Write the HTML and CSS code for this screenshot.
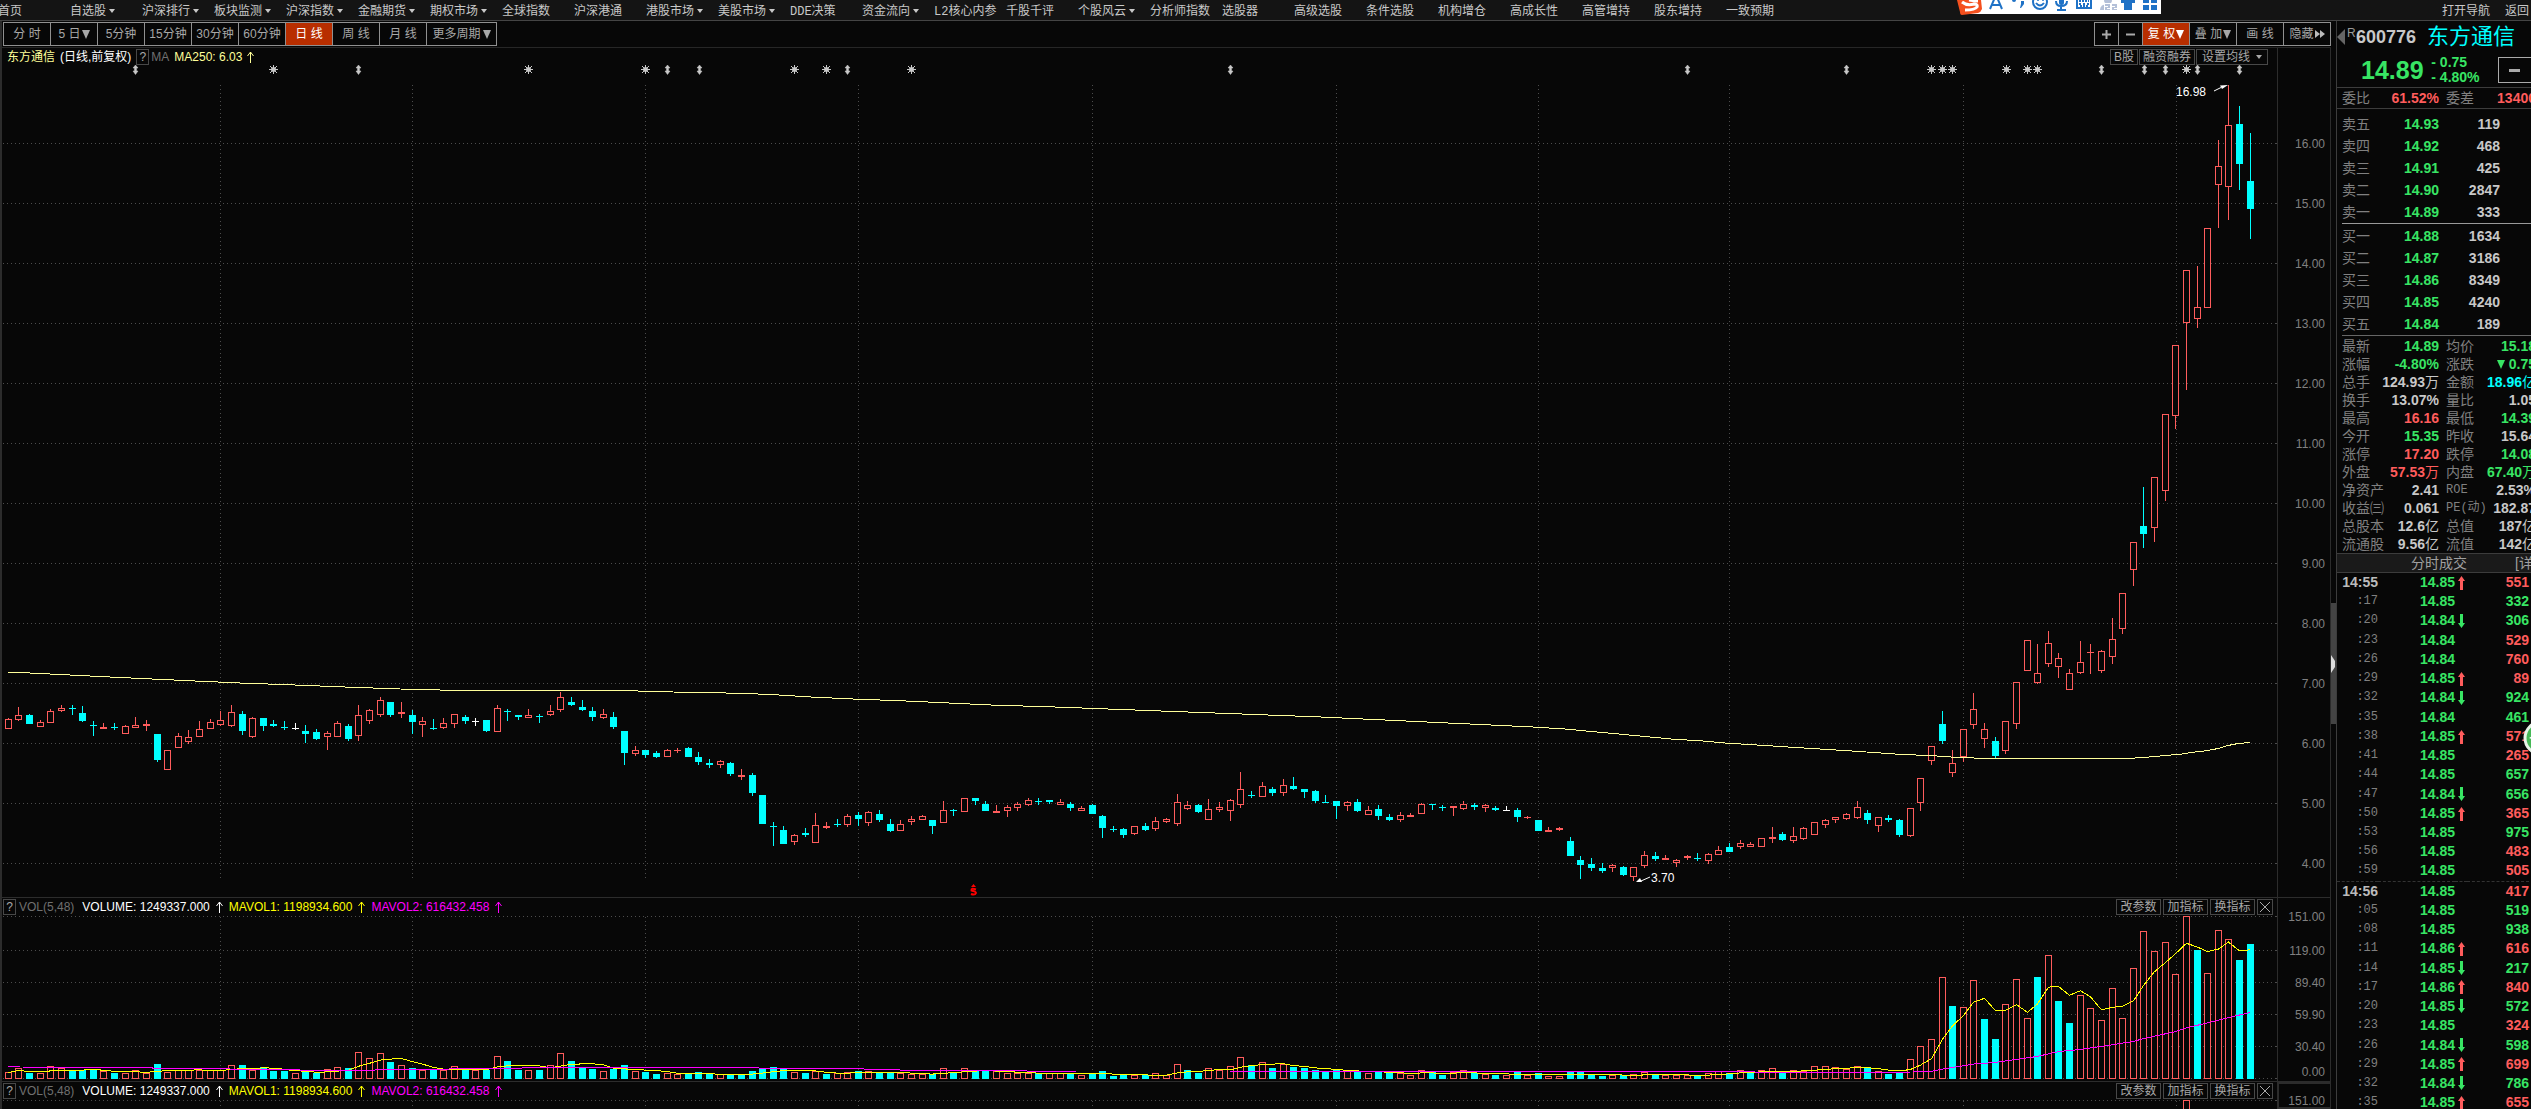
FILE: index.html
```html
<!DOCTYPE html>
<html lang="zh-CN">
<head>
<meta charset="utf-8">
<title>东方通信 600776 日线</title>
<link rel="stylesheet" href="styles.css">
</head>
<body>
<nav class="nav">
  <ul class="nav-list">
    <li><a href="#">首页</a></li>
    <li><a href="#" class="has-menu">自选股</a></li>
    <li><a href="#" class="has-menu">沪深排行</a></li>
    <li><a href="#" class="has-menu">板块监测</a></li>
    <li><a href="#" class="has-menu">沪深指数</a></li>
    <li><a href="#" class="has-menu">金融期货</a></li>
    <li><a href="#" class="has-menu">期权市场</a></li>
    <li><a href="#">全球指数</a></li>
    <li><a href="#">沪深港通</a></li>
    <li><a href="#" class="has-menu">港股市场</a></li>
    <li><a href="#" class="has-menu">美股市场</a></li>
    <li><a href="#"><span class="mono">DDE</span>决策</a></li>
    <li><a href="#" class="has-menu">资金流向</a></li>
    <li><a href="#"><span class="mono">L2</span>核心内参</a></li>
    <li><a href="#">千股千评</a></li>
    <li><a href="#" class="has-menu">个股风云</a></li>
    <li><a href="#">分析师指数</a></li>
    <li><a href="#">选股器</a></li>
    <li><a href="#">高级选股</a></li>
    <li><a href="#">条件选股</a></li>
    <li><a href="#">机构增仓</a></li>
    <li><a href="#">高成长性</a></li>
    <li><a href="#">高管增持</a></li>
    <li><a href="#">股东增持</a></li>
    <li><a href="#">一致预期</a></li>
  </ul>
  <div class="nav-end"><a href="#">打开导航</a><a href="#">返回</a></div>
  <svg class="ime" width="205" height="15" viewBox="0 0 205 15" aria-label="输入法工具栏">
    <rect x="5" y="0" width="199" height="14" fill="#fff"/>
    <path d="M0 0H24L25 9Q24 12 21 13L5 15Q3 15 3 12Z" fill="#f4501e"/>
    <path d="M5 2Q10 6 17 4Q21 4 20 7Q18 10 8 10M12 0Q18 1 21 1" fill="none" stroke="#fff" stroke-width="3"/>
    <g fill="none" stroke="#1f72c6" stroke-width="2">
      <path d="M33 9L39 -5L45 9M35 5H43"/>
      <circle cx="83" cy="2" r="7"/>
      <path d="M79 3Q83 8 87 3"/>
      <path d="M99 1Q99 6 104 6Q110 6 110 1M104 6V10M100 10H109"/>
      <rect x="120" y="-4" width="14" height="12"/>
      <path d="M122 1H132M122 4H124M126 4H128M130 4H132M123 6H131" stroke-dasharray="2 1"/>
    </g>
    <g fill="#1f72c6">
      <circle cx="57" cy="0" r="2"/>
      <path d="M64 1H67V4L64 8H63L64 4Z"/>
      <circle cx="81" cy="0" r="1"/><circle cx="86" cy="0" r="1"/>
      <rect x="102" y="-4" width="5" height="9" rx="2"/>
      <path d="M164 0H178V3H175V10H167V3H164Z"/>
      <path d="M186 0H192V3H186ZM194 0H200V3H194ZM186 5H192V10H186ZM194 5H200V10H194Z"/>
    </g>
    <g fill="#b4c0d8">
      <circle cx="151" cy="0" r="4"/><path d="M143 10Q143 4 151 4Q158 4 158 10Z"/>
      <rect x="147" y="3" width="13" height="8" fill="#fff"/>
      <path d="M148 4H153V8H150V9H153V10H148V7H151V6H148ZM155 4H160V8H157V9H160V10H155V7H158V6H155Z"/>
    </g>
  </svg>
</nav>

<main class="work">
  <section class="charts">
    <div class="toolbar">
      <div class="group">
        <button>分 时</button><button>5 日<i class="tri"></i></button><button>5分钟</button><button>15分钟</button><button>30分钟</button><button>60分钟</button><button class="on">日 线</button><button>周 线</button><button>月 线</button><button class="wide">更多周期<i class="tri"></i></button>
      </div>
      <div class="group">
        <button class="sq" aria-label="放大"><svg width="9" height="9"><path d="M0 4.5H9M4.5 0V9" stroke="#aaa" stroke-width="2"/></svg></button><button class="sq" aria-label="缩小"><svg width="9" height="9"><path d="M0 4.5H9" stroke="#aaa" stroke-width="2"/></svg></button><button class="on">复 权<i class="tri"></i></button><button>叠 加<i class="tri"></i></button><button>画 线</button><button>隐藏<svg width="10" height="8"><path d="M0 0L5 4L0 8ZM5 0L10 4L5 8Z" fill="#bbb"/></svg></button>
      </div>
    </div>

    <div class="panel">
      <div class="plot">
        <div class="head">
          <span class="name">东方通信</span><span class="white">(日线,前复权)</span><button class="tag help">?</button><span class="dim">MA</span><span class="name">MA250: 6.03</span><svg class="up" viewBox="0 0 7 12"><path d="M3.5 12V1M0.5 5L3.5 1L6.5 5"/></svg>
          <div class="tags"><button class="tag">B股</button><button class="tag">融资融券</button><button class="tag menu">设置均线<i class="caret"></i></button></div>
        </div>
        <svg id="price" class="price" viewBox="2 65 2275 832" preserveAspectRatio="none"></svg>
      </div>
      <ol class="axis price-axis">
        <li>16.00</li><li>15.00</li><li>14.00</li><li>13.00</li><li>12.00</li><li>11.00</li><li>10.00</li><li>9.00</li><li>8.00</li><li>7.00</li><li>6.00</li><li>5.00</li><li>4.00</li>
      </ol>
    </div>

    <div class="panel">
      <div class="plot">
        <div class="head vol-head">
          <button class="tag help">?</button><span class="dim">VOL(5,48)</span><span class="white">VOLUME: 1249337.000</span><svg class="up white" viewBox="0 0 7 12"><path d="M3.5 12V1M0.5 5L3.5 1L6.5 5"/></svg><span class="yellow">MAVOL1: 1198934.600</span><svg class="up yellow" viewBox="0 0 7 12"><path d="M3.5 12V1M0.5 5L3.5 1L6.5 5"/></svg><span class="pink">MAVOL2: 616432.458</span><svg class="up pink" viewBox="0 0 7 12"><path d="M3.5 12V1M0.5 5L3.5 1L6.5 5"/></svg>
          <div class="tags vol-tags"><button class="tag">改参数</button><button class="tag">加指标</button><button class="tag">换指标</button><button class="tag close" aria-label="关闭"><svg width="10" height="10"><path d="M0 0L10 10M10 0L0 10" stroke="#aaa"/></svg></button></div>
        </div>
        <svg class="volume" viewBox="2 915 2275 164" preserveAspectRatio="none"></svg>
      </div>
      <ol class="axis vol-axis"><li>151.00</li><li>119.00</li><li>89.40</li><li>59.90</li><li>30.40</li><li>0.00</li></ol>
    </div>

    <div class="panel rest">
      <div class="plot">
        <div class="head vol-head">
          <button class="tag help">?</button><span class="dim">VOL(5,48)</span><span class="white">VOLUME: 1249337.000</span><svg class="up white" viewBox="0 0 7 12"><path d="M3.5 12V1M0.5 5L3.5 1L6.5 5"/></svg><span class="yellow">MAVOL1: 1198934.600</span><svg class="up yellow" viewBox="0 0 7 12"><path d="M3.5 12V1M0.5 5L3.5 1L6.5 5"/></svg><span class="pink">MAVOL2: 616432.458</span><svg class="up pink" viewBox="0 0 7 12"><path d="M3.5 12V1M0.5 5L3.5 1L6.5 5"/></svg>
          <div class="tags vol-tags"><button class="tag">改参数</button><button class="tag">加指标</button><button class="tag">换指标</button><button class="tag close" aria-label="关闭"><svg width="10" height="10"><path d="M0 0L10 10M10 0L0 10" stroke="#aaa"/></svg></button></div>
        </div>
        <svg class="volume" viewBox="2 915 2275 164" preserveAspectRatio="none"></svg>
      </div>
      <ol class="axis vol-axis boxed"><li>151.00</li></ol>
    </div>
  </section>

  <div class="splitter"><button class="handle" aria-label="收起"><svg width="5" height="18"><path d="M0 0L4 6V12L0 18Z" fill="#ddd"/></svg></button></div>

  <aside class="side">
    <div class="side-in">
      <header class="quote">
        <div class="title">
          <svg width="8" height="16"><path d="M8 0V16L0 8Z" fill="#666"/></svg><sup>R</sup><span class="code">600776</span><span class="stock">东方通信</span><svg width="8" height="16"><path d="M0 0V16L8 8Z" fill="#888"/></svg>
        </div>
        <div class="last">
          <span class="big">14.89</span>
          <span class="chg"><span>- 0.75</span><span>- 4.80%</span></span>
          <button class="minus" aria-label="减"><svg width="11" height="3"><rect width="11" height="3" fill="#aaa"/></svg></button>
        </div>
      </header>
      <table class="stats ratio">
        <tr><th>委比</th><td class="r">61.52%</td><th>委差</th><td class="r">13400</td></tr>
      </table>
      <table class="book asks">
        <tr><th>卖五</th><td class="g">14.93</td><td>119</td><td></td></tr>
        <tr><th>卖四</th><td class="g">14.92</td><td>468</td><td></td></tr>
        <tr><th>卖三</th><td class="g">14.91</td><td>425</td><td></td></tr>
        <tr><th>卖二</th><td class="g">14.90</td><td>2847</td><td></td></tr>
        <tr><th>卖一</th><td class="g">14.89</td><td>333</td><td></td></tr>
      </table>
      <table class="book bids">
        <tr><th>买一</th><td class="g">14.88</td><td>1634</td><td></td></tr>
        <tr><th>买二</th><td class="g">14.87</td><td>3186</td><td></td></tr>
        <tr><th>买三</th><td class="g">14.86</td><td>8349</td><td></td></tr>
        <tr><th>买四</th><td class="g">14.85</td><td>4240</td><td></td></tr>
        <tr><th>买五</th><td class="g">14.84</td><td>189</td><td></td></tr>
      </table>
      <table class="stats">
        <tr><th>最新</th><td class="g">14.89</td><th>均价</th><td class="g">15.18</td></tr>
        <tr><th>涨幅</th><td class="g">-4.80%</td><th>涨跌</th><td class="g"><i class="tri"></i> 0.75</td></tr>
        <tr><th>总手</th><td>124.93<b>万</b></td><th>金额</th><td class="c">18.96<b>亿</b></td></tr>
        <tr><th>换手</th><td>13.07%</td><th>量比</th><td>1.05</td></tr>
        <tr><th>最高</th><td class="r">16.16</td><th>最低</th><td class="g">14.39</td></tr>
        <tr><th>今开</th><td class="g">15.35</td><th>昨收</th><td>15.64</td></tr>
        <tr><th>涨停</th><td class="r">17.20</td><th>跌停</th><td class="g">14.08</td></tr>
        <tr><th>外盘</th><td class="r">57.53<b>万</b></td><th>内盘</th><td class="g">67.40<b>万</b></td></tr>
        <tr><th>净资产</th><td>2.41</td><th class="mono">ROE</th><td>2.53%</td></tr>
        <tr><th>收益㈢</th><td>0.061</td><th class="mono">PE(动)</th><td>182.87</td></tr>
        <tr><th>总股本</th><td>12.6<b>亿</b></td><th>总值</th><td>187<b>亿</b></td></tr>
        <tr><th>流通股</th><td>9.56<b>亿</b></td><th>流值</th><td>142<b>亿</b></td></tr>
      </table>
      <h2 class="ticks-title"><span>分时成交</span><a href="#">[详细]</a></h2>
      <table class="ticks"><tbody id="ticks"></tbody></table>
    </div>
    <button class="float" aria-label="助手"><svg width="36" height="36" viewBox="0 0 36 36"><circle cx="18" cy="18" r="16" fill="#45b856" stroke="#e8f4e8" stroke-width="3"/><path d="M6 18L12 14V17H24V20H12Z" fill="#fff"/></svg></button>
  </aside>
</main>
<script src="chart.js"></script>
</body>
</html>
```

FILE: styles.css
```css
* { box-sizing: border-box; }

:root {
  --bg: #070707;
  --line: #3c3c3c;
  --text: #c8c8c8;
  --dim: #808080;
  --red: #ff5c5c;
  --green: #38e564;
  --cyan: #00ffff;
}

body {
  margin: 0;
  height: 100vh;
  overflow: hidden;
  display: flex;
  flex-direction: column;
  background: var(--bg);
  color: var(--text);
  font: 12px/16px "Liberation Sans", "Noto Sans CJK SC", sans-serif;
}

ul, ol { list-style: none; margin: 0; padding: 0; }
a { color: inherit; text-decoration: none; }
button { font: inherit; color: inherit; background: none; border: 0; padding: 0; margin: 0; white-space: nowrap; }
.mono { font-family: "Liberation Mono", "Noto Sans CJK SC", monospace; }

/* top menu */
.nav {
  position: relative;
  flex: none;
  display: flex;
  justify-content: space-between;
  height: 21px;
  background: #141414;
  border-bottom: 1px solid #444;
  line-height: 22px;
  white-space: nowrap;
}
.nav-list { display: flex; margin-left: -2px; }
.nav-list li { width: 72px; }
.has-menu::after {
  content: "";
  display: inline-block;
  margin-left: 3px;
  vertical-align: 2px;
  border: 3px solid transparent;
  border-top: 4px solid var(--text);
  border-bottom: 0;
}
.nav-end { display: flex; gap: 15px; padding-right: 2px; }
.ime { position: absolute; top: 0; right: 369px; }

.work { flex: 1; display: flex; min-height: 0; overflow: hidden; }
.charts {
  flex: 1;
  min-width: 0;
  display: flex;
  flex-direction: column;
  overflow: hidden;
  border-left: 2px solid #2c2c2c;
}

/* period buttons */
.toolbar {
  flex: none;
  display: flex;
  justify-content: space-between;
  height: 27px;
  padding: 1px 0 1px 1px;
  border-bottom: 1px solid #262626;
}
.group { display: flex; height: 24px; border-left: 1px solid #909090; }
.group button {
  display: flex;
  align-items: center;
  justify-content: center;
  gap: 1px;
  width: 47px;
  border: 1px solid #909090;
  border-left: 0;
  color: #a8a8a8;
}
.group .wide { width: 70px; gap: 2px; }
.group .sq { width: 24px; }
.group .on { background: #b82e00; color: #fff; }
.tri {
  display: inline-block;
  border: 4px solid transparent;
  border-top: 9px solid currentColor;
  border-bottom: 0;
}
.caret { border: 3px solid transparent; border-top: 4px solid currentColor; border-bottom: 0; }

/* chart panels */
.panel { flex: none; display: flex; border-bottom: 1px solid #2c2c2c; }
.rest { flex: 1 1 0; min-height: 0; overflow: hidden; border-bottom: 0; }
.plot { flex: 1; min-width: 0; }
.plot > svg { display: block; width: 100%; }
.price { height: 832px; }
.volume { height: 164px; }
.head {
  display: flex;
  align-items: center;
  gap: 5px;
  height: 17px;
  padding: 0 9px 0 5px;
  white-space: nowrap;
}
.vol-head { gap: 6px; padding: 0 4px 0 1px; }
.name { color: #ffff99; }
.white { color: #fff; }
.yellow { color: #ffff00; }
.pink { color: #ff00ff; }
.dim { color: #707070; }
.help + .dim { margin-left: -3px; }
.vol-head .dim { margin-right: 2px; }
.up { width: 7px; height: 12px; fill: none; stroke: currentColor; }
.head > .name + .up { color: #ffff99; }
.tags { display: flex; gap: 1px; margin-left: auto; }
.vol-tags { gap: 2px; }
.tag {
  display: flex;
  align-items: center;
  justify-content: center;
  height: 16px;
  padding: 0 3px;
  border: 1px solid #484848;
  color: #a8a8a8;
}
.menu { gap: 6px; padding: 0 5px; }
.vol-tags .tag { width: 45px; }
.vol-tags .close { width: 16px; padding: 0; }
.help.tag { width: 13px; padding: 0; }

.axis {
  width: 54px;
  padding-right: 5px;
  border: 1px solid #2c2c2c;
  border-width: 0 1px;
  color: var(--dim);
  text-align: right;
}
.price-axis { padding-top: 66px; }
.price-axis li { line-height: 60px; }
.vol-axis { padding-top: 3px; }
.vol-axis li { line-height: 32px; }
.vol-axis li:first-child { margin-bottom: 2px; }
.vol-axis li:last-child { line-height: 18px; }
.boxed { border-width: 2px 1px 2px 2px; padding-top: 8px; }
.vol-axis.boxed li { margin: 0; }

.grid { stroke: #4c4c4c; stroke-dasharray: 1 3; fill: none; }
.note { fill: #fff; font-size: 12px; }

/* divider between charts and quote column */
.splitter { width: 5px; padding-top: 582px; }
.handle { display: flex; align-items: center; width: 5px; height: 121px; background: #444; }

/* quote column */
.side { position: relative; width: 195px; overflow: hidden; border-left: 1px solid var(--line); }
.side-in { width: 202px; }
.quote { height: 67px; border-bottom: 1px solid var(--line); }
.title { display: flex; align-items: center; height: 32px; white-space: nowrap; }
.title sup { width: 11px; padding-left: 2px; font-size: 12px; line-height: 24px; align-self: flex-start; color: #999; }
.code { font: bold 18px/32px "Liberation Sans", sans-serif; }
.stock { flex: 1; padding-left: 11px; font-size: 22px; line-height: 32px; color: var(--cyan); }
.title svg { flex: none; }
.last { display: flex; align-items: center; height: 34px; padding-left: 24px; color: var(--green); font-weight: bold; }
.big { width: 72px; font-size: 25px; line-height: 32px; }
.chg { display: grid; width: 68px; font-size: 14px; line-height: 15px; }
.minus { width: 42px; height: 26px; border: 1px solid #aaa; display: flex; align-items: center; padding-left: 10px; }

table { border-collapse: collapse; table-layout: fixed; width: 100%; font-size: 14px; }
th { padding: 0; font-weight: normal; text-align: left; color: var(--dim); white-space: nowrap; }
td { padding: 0; font-weight: bold; text-align: right; white-space: nowrap; }
td b { font-weight: normal; }
.r { color: var(--red); }
.g { color: var(--green); }
.c { color: var(--cyan); }

.stats { width: 194px; margin-left: 5px; line-height: 18px; }
.stats th:first-child { width: 36px; }
.stats th:nth-child(3) { width: 46px; padding-left: 7px; }
.stats td:nth-child(2) { width: 61px; }
.stats .mono { font-size: 12px; }
.ratio { width: 199px; margin-left: 0; line-height: 20px; border-bottom: 1px solid var(--line); }
.ratio th:first-child { width: 41px; padding-left: 5px; }
.book { width: 196px; margin-left: 5px; line-height: 22px; }
.book th { width: 36px; }
.book td:nth-child(2) { width: 61px; }
.book td:nth-child(3) { width: 61px; }
.asks { margin-top: 4px; border-bottom: 1px solid #999; }
.bids { margin-top: 1px; border-bottom: 1px solid #666; margin-bottom: 1px; }

.ticks-title {
  display: flex;
  justify-content: space-between;
  margin: 0;
  padding: 0 0 0 74px;
  border: 1px solid var(--line);
  border-width: 1px 0;
  background: #1a1a1a;
  font-size: 14px;
  font-weight: normal;
  line-height: 18px;
  color: #a0a0a0;
  white-space: nowrap;
}
.ticks-title a { width: 24px; }
.ticks { width: 192px; }
.ticks tr { height: 19px; line-height: 19px; }
.ticks tr:nth-child(4n) { height: 20px; }
.ticks td:nth-child(1) { width: 41px; color: #bbb; }
.ticks td:nth-child(1).mono { font-size: 12px; font-weight: normal; color: var(--dim); }
.ticks td:nth-child(2) { width: 77px; }
.ticks td:nth-child(3) { width: 12px; }
.ticks td svg { display: block; margin-left: 3px; }
.ticks .minute { border-top: 1px dashed #333; }

.float { position: absolute; top: 699px; right: -28px; width: 36px; height: 36px; }
```

FILE: chart.js
```js
// One entry per trading day: colour, high, body top, body bottom, low, volume top
const days = `r718 719 729 729 1072|r707 715 720 721 1068|c714 715 724 724 1073|r720 722 727 727 1073|r709 711 723 723 1066|r705 708 711 712 1068|c705 708 709 715 1071|c706 713 721 722 1070|c721 725 726 736 1069|r723 727 729 729 1071
c723 727 728 730 1073|r725 726 734 734 1073|r717 725 728 728 1070|r720 724 726 731 1073|c734 734 760 762 1064|r750 750 770 770 1072|r733 736 748 748 1070|r730 737 742 744 1070|r721 729 737 737 1070|r719 722 729 729 1070
r711 720 725 726 1070|r705 712 726 727 1065|c711 714 731 735 1065|r717 718 737 738 1070|c718 718 726 731 1067|c720 724 726 727 1071|c721 727 728 730 1071|w723 728 729 730 1073|c725 731 734 743 1071|c729 732 739 740 1073
r731 733 737 750 1069|r721 723 737 737 1067|c724 726 739 741 1068|r705 715 736 741 1052|r709 710 721 724 1058|r697 700 715 717 1053|c702 702 715 717 1062|r702 712 714 718 1065|c710 715 722 734 1068|r717 721 725 737 1070
c719 728 729 730 1070|r718 723 728 729 1070|r714 714 724 728 1066|c715 717 721 724 1070|w718 721 722 726 1070|c720 720 731 732 1070|r705 708 732 732 1056|c709 711 712 721 1061|c715 715 717 720 1070|r709 715 718 718 1070
c714 716 717 723 1070|r705 711 715 716 1065|r692 697 710 712 1053|c697 702 705 706 1061|c700 707 710 711 1068|c707 711 717 721 1069|r709 714 718 719 1071|c712 717 727 729 1069|c731 731 753 765 1065|r746 750 754 756 1071
c750 750 755 758 1072|c751 753 757 758 1074|r749 750 757 757 1073|r748 750 751 753 1074|c747 748 757 757 1074|c752 757 762 765 1072|c759 763 765 768 1074|r760 761 765 768 1074|c762 763 774 776 1074|r769 775 777 780 1075
c773 775 793 796 1071|c795 795 824 824 1069|c822 826 827 846 1067|c826 830 844 844 1069|r834 835 842 845 1072|c828 833 835 837 1073|r813 825 843 843 1071|r822 826 828 829 1074|c819 824 825 827 1073|r814 816 825 827 1072
c812 815 819 826 1071|r811 812 823 826 1071|c810 814 820 822 1072|c819 824 831 832 1073|r820 824 831 831 1073|r816 819 822 825 1074|r815 816 820 820 1074|c820 820 826 834 1074|r801 810 823 823 1068|c809 810 811 816 1072
r798 798 812 812 1068|c798 798 801 805 1071|c801 804 811 811 1071|r805 811 813 813 1071|r805 807 811 817 1073|r802 804 808 811 1073|r798 800 805 806 1073|c798 801 802 805 1073|c800 800 802 804 1073|r799 802 805 805 1073
c802 804 808 811 1073|r806 808 811 811 1075|c804 805 814 814 1073|c815 816 828 838 1071|c826 829 830 832 1076|c828 829 835 838 1075|r826 826 834 835 1075|c823 826 830 831 1075|r817 821 829 831 1073|r818 819 822 823 1075
r794 802 824 826 1064|r801 805 809 810 1070|c804 805 812 813 1073|r799 809 820 820 1068|r802 807 810 812 1070|r799 800 811 821 1066|r772 789 805 808 1057|c791 795 796 798 1065|r782 786 797 797 1062|c787 789 793 796 1068
r779 785 793 796 1064|c777 786 789 790 1067|c789 789 792 798 1068|c790 791 801 803 1070|c795 802 803 803 1071|c801 801 806 819 1069|r801 802 806 811 1071|c799 802 811 812 1071|r806 810 815 815 1073|c805 809 816 820 1072
c814 817 820 821 1072|r812 815 820 822 1073|r813 815 817 817 1075|r803 804 814 814 1070|c804 804 805 810 1072|c805 807 808 811 1075|r806 806 808 816 1072|r801 804 809 810 1070|c803 805 807 810 1073|r804 805 808 812 1074
c806 808 810 811 1075|w806 810 811 811 1075|c808 810 817 822 1072|r816 817 818 819 1075|c820 820 831 831 1073|r827 830 832 832 1076|r827 828 830 831 1076|c837 841 856 856 1072|c856 860 865 879 1072|c858 864 868 871 1075
c863 868 871 873 1076|r864 865 868 872 1075|c866 867 875 876 1075|r867 867 877 881 1074|r851 855 866 868 1072|c852 856 859 861 1075|r855 858 860 860 1075|r859 860 863 867 1075|r855 856 858 860 1075|c853 858 859 861 1075
r853 854 861 864 1073|r846 850 855 855 1071|c843 847 852 852 1073|r840 843 847 849 1070|r842 844 847 847 1073|r838 838 847 847 1070|r827 837 839 843 1068|c832 834 840 841 1073|r827 836 841 843 1070|r827 828 839 840 1071
r822 822 835 835 1066|r819 820 825 828 1066|r817 817 820 823 1067|r813 814 819 820 1069|r801 807 818 819 1066|c810 813 820 824 1068|r817 817 826 832 1071|c815 818 820 822 1074|c819 820 835 837 1073|r808 808 836 837 1059
r778 778 803 811 1046|r746 746 761 765 1039|c711 724 741 744 977|r750 763 773 777 1006|r729 729 757 762 1007|r693 709 725 729 980|r723 729 739 748 1019|c737 741 756 758 1039|r721 721 751 754 1004|r682 682 724 729 979
r640 640 671 671 1018|r644 673 683 684 977|r631 643 664 667 955|r653 658 667 678 1001|r669 673 690 690 1023|r641 662 673 674 995|r644 652 653 674 1008|r650 651 671 673 1020|r618 639 657 664 988|r593 593 629 634 1018
r542 542 570 586 968|c487 526 534 548 931|r477 477 528 542 951|r414 414 491 501 942|r345 345 416 429 974|r270 270 323 390 916|r266 307 319 328 950|r228 228 308 308 973|r140 166 185 228 930|r85 125 187 220 939
c106 124 164 190 960|c133 181 209 239 944`
  .split(/[|\n]/)
  .map(s => [s[0], ...s.slice(1).split(' ').map(Number)]);

// Days whose volume bar takes the opposite colour of the candle body
const flipped = new Set([69, 77, 78, 98, 111, 164, 182, 183, 186, 191, 193, 194, 201, 206]);
const colours = { r: '#ff5c5c', c: '#00ffff', w: '#ffffff' };
const gridX = [220, 412, 645, 858, 1092, 1336, 1538, 1729, 1963, 2176];
const x = i => Math.floor(8.3 + 10.625 * i);

const rect = (l, t, w, h, fill) => `<rect x="${l}" y="${t}" width="${w}" height="${h}" fill="${fill}"/>`;
const box = (c, t, b, colour) =>
  `<rect x="${c - 2.5}" y="${t + .5}" width="6" height="${b - t - 1}" fill="#070707" stroke="${colour}"/>`;
const line = (pts, colour) =>
  `<polyline points="${pts}" fill="none" stroke="${colour}" shape-rendering="crispEdges"/>`;
const hGrid = y => `<path class="grid" d="M3 ${y + .5}H2274"/><path d="M2275 ${y + .5}H2277" stroke="#4c4c4c"/>`;

function priceChart() {
  let out = '';
  for (let y = 143; y < 880; y += 60) out += hGrid(y);
  for (const g of gridX) out += `<path class="grid" d="M${g + .5} 85V879"/>`;
  days.forEach(([k, h, t, b, l], i) => {
    const c = x(i), f = colours[k];
    if (t > h) out += rect(c, h, 1, t - h, f);
    if (l > b) out += rect(c, b, 1, l - b, f);
    out += k === 'r' && b - t > 2 ? box(c, t, b, f) : rect(c - 3, t, 7, b - t, f);
  });
  out += line(`8,672 30,673 70,675 110,677 152,679 195,681 240,683 295,685 345,687 400,689 440,690 620,690.5
    673,692 726,693 758,694 779,695 811,697 853,699 906,701 949,703 991,705 1055,707 1108,709 1161,711 1215,713
    1268,715 1321,717 1363,719 1406,721 1448,723 1491,725 1533,727 1565,729 1586,731 1608,733 1629,735 1650,737
    1671,739 1703,741 1725,743 1757,745 1788,747 1820,749 1852,751 1895,754 1937,756 1958,757.5 1990,758.5
    2128,758.5 2149,757 2171,755 2182,754 2195,752 2208,750.5 2218,748.5 2228,745.5 2238,743.5 2250,742.5`, '#ffff99');

  const arrows = [135, 358, 667, 699, 847, 1230, 1687, 1846, 2101, 2144, 2165, 2197, 2239];
  const stars = [273, 528, 645, 794, 826, 911, 1931, 1942, 1952, 2006, 2027, 2037, 2186];
  for (const a of arrows)
    out += `<path transform="translate(${a} 65)" d="M.5 0L3 3H1.500V6H3L.5 9.500L-2 6H-.500V3H-2Z" fill="#c8c8c8" stroke="#c8c8c8" stroke-width=".5"/>`;
  for (const s of stars)
    out += `<path transform="translate(${s + .5} 69.5)" d="M0-4.500V4.500M-4.500 0H4.500M-3.500-3.500L3.500 3.500M-3.500 3.500L3.500-3.500" stroke="#c8c8c8"/><circle cx="${s + .5}" cy="69.5" r="2.500" fill="#c8c8c8"/>`;

  out += `<text class="note" x="2176" y="96">16.98</text>
    <path d="M2214 91L2221 87.500" stroke="#fff"/><path d="M2228 85L2220 85.500L2222 89Z" fill="#fff"/>
    <text class="note" x="1651" y="882">3.70</text>
    <path d="M1650 877L1641 881" stroke="#fff"/><path d="M1636 882L1642 882L1640 878Z" fill="#fff"/>
    <path d="M971 887L973.500 884L976 887Z" fill="#f00"/>
    <path d="M976 889.500Q971 887.500 971.500 890.500Q976 891.500 976 893Q975 895.500 971 894" fill="none" stroke="#f00" stroke-width="2"/>`;
  return out;
}

function volumeChart() {
  let out = '';
  for (const y of [916, 950, 982, 1014, 1046, 1078]) out += hGrid(y);
  for (const g of gridX) out += `<path class="grid" d="M${g + .5} 917V1078"/>`;
  days.forEach((d, i) => {
    const red = (d[0] !== 'c') !== flipped.has(i), c = x(i), top = d[5];
    out += red ? box(c, top, 1079, colours.r) : rect(c - 3, top, 7, 1079 - top, colours.c);
  });
  const ma5 = days.map((d, i) => {
    const span = days.slice(Math.max(0, i - 4), i + 1);
    return `${x(i) + .5},${(span.reduce((s, v) => s + v[5], 0) / span.length + .5).toFixed(1)}`;
  }).join(' ');
  out += line(ma5, '#ffff00');
  out += line(`8,1066 20,1067 110,1067.500 195,1068.500 300,1070 375,1070 560,1067.500 705,1067.500 864,1069
    900,1070 1002,1070.500 1076,1072 1230,1072 1240,1071 1690,1071.500 1820,1072.500 1913,1072 1933,1071
    1943,1069 1974,1064 1995,1062.500 2016,1059.500 2037,1056.500 2059,1051.500 2080,1049.500 2101,1046.500
    2133,1041.500 2144,1038.500 2176,1031.500 2186,1028 2207,1023 2229,1017.500 2250,1012.500`, '#ff00ff');
  return out;
}

document.getElementById('price').innerHTML = priceChart();
document.querySelectorAll('.volume').forEach(v => { v.innerHTML = volumeChart(); });

// Time, price, direction (u up, d down), volume, volume colour
const trades = `14:55 14.85 u 551 r|:17 14.85 - 332 g|:20 14.84 d 306 g|:23 14.84 - 529 r|:26 14.84 - 760 r|:29 14.85 u 89 r|:32 14.84 d 924 g
:35 14.84 - 461 g|:38 14.85 u 571 r|:41 14.85 - 265 r|:44 14.85 - 657 g|:47 14.84 d 656 g|:50 14.85 u 365 r|:53 14.85 - 975 g|:56 14.85 - 483 r
:59 14.85 - 505 r|14:56 14.85 - 417 r|:05 14.85 - 519 g|:08 14.85 - 938 g|:11 14.86 u 616 r|:14 14.85 d 217 g|:17 14.86 u 840 r|:20 14.85 d 572 g
:23 14.85 - 324 r|:26 14.84 d 598 g|:29 14.85 u 699 r|:32 14.84 d 786 g|:35 14.85 u 655 r`.split(/[|\n]/);
const arrow = {
  u: '<svg width="7" height="14"><path d="M3.500 0L7 5H5V14H2V5H0Z" fill="#ff5c5c"/></svg>',
  d: '<svg width="7" height="14"><path d="M3.500 14L7 9H5V0H2V9H0Z" fill="#38e564"/></svg>',
  '-': ''
};
document.getElementById('ticks').innerHTML = trades.map((t, i) => {
  const [time, price, dir, vol, colour] = t.split(' ');
  const minute = time.length > 3;
  return `<tr${minute && i ? ' class="minute"' : ''}><td${minute ? '' : ' class="mono"'}>${time}</td>` +
    `<td class="g">${price}</td><td>${arrow[dir]}</td><td class="${colour}">${vol}</td></tr>`;
}).join('');
```
